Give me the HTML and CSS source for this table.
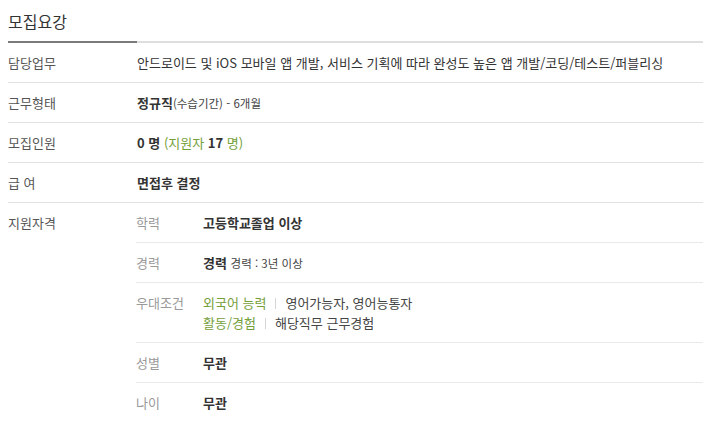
FILE: index.html
```html
<!DOCTYPE html>
<html lang="ko">
<head>
<meta charset="utf-8">
<link rel="stylesheet" href="styles.css">
</head>
<body>
<div class="wrap">
  <div class="head"><h2 class="title">모집요강</h2></div>
  <div class="row">
    <div class="label">담당업무</div>
    <div class="value">안드로이드 및 iOS 모바일 앱 개발, 서비스 기획에 따라 완성도 높은 앱 개발/코딩/테스트/퍼블리싱</div>
  </div>
  <div class="row">
    <div class="label">근무형태</div>
    <div class="value"><b>정규직</b><span class="small">(수습기간) - 6개월</span></div>
  </div>
  <div class="row">
    <div class="label">모집인원</div>
    <div class="value"><b>0 명</b> <span class="green">(지원자 <b class="dark">17</b> 명)</span></div>
  </div>
  <div class="row">
    <div class="label">급 여</div>
    <div class="value"><b>면접후 결정</b></div>
  </div>
  <div class="row last">
    <div class="label">지원자격</div>
    <div class="sub">
      <div class="subrow">
        <div class="sublabel">학력</div>
        <div class="subvalue"><b>고등학교졸업 이상</b></div>
      </div>
      <div class="subrow">
        <div class="sublabel">경력</div>
        <div class="subvalue"><b>경력</b> <span class="small">경력 : 3년 이상</span></div>
      </div>
      <div class="subrow">
        <div class="sublabel">우대조건</div>
        <div class="subvalue lines">
          <div><span class="green">외국어 능력</span><span class="bar"></span>영어가능자, 영어능통자</div>
          <div><span class="green">활동/경험</span><span class="bar"></span>해당직무 근무경험</div>
        </div>
      </div>
      <div class="subrow">
        <div class="sublabel">성별</div>
        <div class="subvalue"><b>무관</b></div>
      </div>
      <div class="subrow nob">
        <div class="sublabel">나이</div>
        <div class="subvalue"><b>무관</b></div>
      </div>
    </div>
  </div>
</div>
</body>
</html>
```
FILE: styles.css
```css
html, body {
  margin: 0;
  padding: 0;
  background: #fff;
}
body {
  font-family: "Noto Sans CJK KR", "Noto Sans", sans-serif;
  font-size: 13px;
  color: #333;
}
.wrap {
  width: 695px;
  padding: 0 8px;
}
.head {
  border-bottom: 2px solid #dedede;
}
.title {
  margin: 0 0 -2px 0;
  width: 129px;
  height: 43px;
  box-sizing: border-box;
  padding-top: 10px;
  font-size: 16px;
  line-height: 22px;
  font-weight: normal;
  color: #333;
  border-bottom: 2px solid #7a7a7a;
}
.row {
  display: flex;
  border-bottom: 1px solid #e2e2e2;
}
.row.last {
  border-bottom: none;
}
.label {
  width: 128px;
  flex: none;
  padding: 10px 0 9px;
  line-height: 20px;
  color: #555;
}
.value {
  padding: 10px 0 9px 1px;
  line-height: 20px;
  color: #333;
}
b {
  font-weight: bold;
  color: #333;
}
.small {
  font-size: 11.5px;
  color: #444;
}
.green {
  color: #74a03a;
}
.green .dark {
  color: #333;
}
.sub {
  flex: 1;
}
.subrow {
  display: flex;
  border-bottom: 1px solid #e9e9e9;
}
.subrow.nob {
  border-bottom: none;
}
.sublabel {
  width: 67px;
  flex: none;
  padding: 10px 0 9px;
  line-height: 20px;
  color: #999;
}
.subvalue {
  padding: 10px 0 9px;
  line-height: 20px;
  color: #333;
}
.subvalue.lines {
  color: #444;
}
.subvalue.lines > div {
  display: flex;
  align-items: center;
}
.bar {
  display: inline-block;
  width: 1px;
  height: 11px;
  background: #d5d5d5;
  margin: 0 9px 0 9px;
}
```
